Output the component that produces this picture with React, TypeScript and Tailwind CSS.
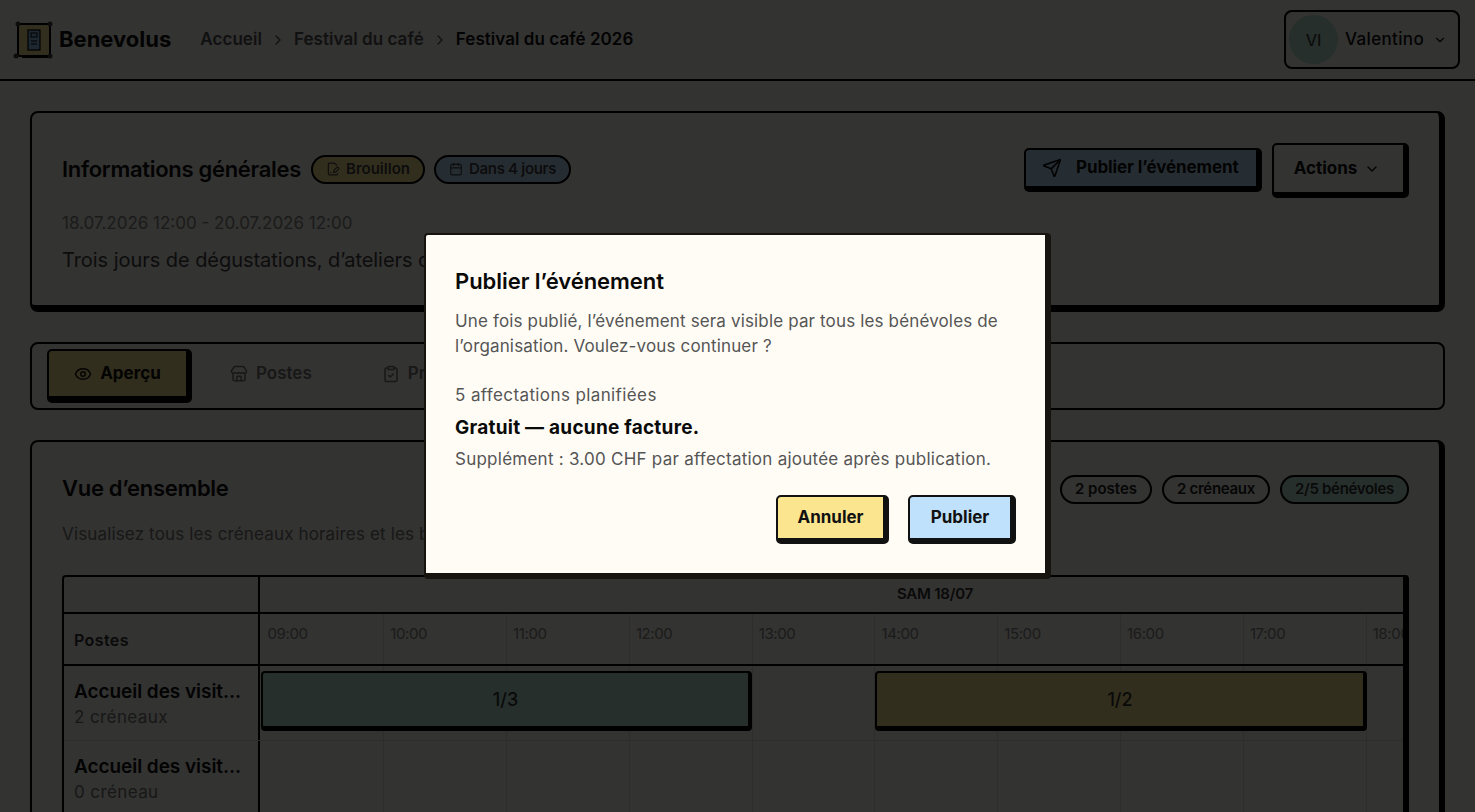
import { Calendar, ChevronDown, ChevronRight, ClipboardCheck, Eye, FileSignature, Send, Store } from "lucide-react";

const hours = ["09:00", "10:00", "11:00", "12:00", "13:00", "14:00", "15:00", "16:00", "17:00", "18:00"];

function Logo() {
  return (
    <svg width="42" height="42" viewBox="0 0 42 42" className="shrink-0">
      <rect x="5" y="5" width="32" height="32" rx="2" fill="#fbe68f" stroke="#000" strokeWidth="2" />
      <path d="M37 8v30H9" fill="none" stroke="#000" strokeWidth="2" />
      <rect x="15" y="11" width="12" height="20" fill="#8fc4ee" stroke="#000" strokeWidth="1.2" />
      <rect x="18" y="14" width="6" height="4" fill="none" stroke="#000" strokeWidth="1" />
      <path d="M18 22h6M18 25h6" stroke="#000" strokeWidth="1" />
      <circle cx="5" cy="5" r="2.5" fill="#444" />
      <circle cx="37" cy="5" r="2.5" fill="#444" />
      <circle cx="3" cy="37" r="2.5" fill="#444" />
      <circle cx="37" cy="37" r="2.5" fill="#444" />
    </svg>
  );
}

function Timeline() {
  return (
    <div className="flex h-full w-[1350px] pl-[1.5px]">
      {hours.map((h) => (
        <div key={h} className="h-full w-[122.8px] shrink-0 border-r border-black/10" />
      ))}
    </div>
  );
}

export default function App() {
  return (
    <div className="relative h-screen overflow-hidden bg-[#fffcf5] font-['Inter',sans-serif] text-[#111]">
      <header className="flex h-[81px] items-center justify-between border-b-2 border-black pl-[13px] pr-[15px]">
        <div className="flex items-center">
          <div className="flex items-center">
            <Logo />
            <span className="ml-[4px] text-[22px] font-bold tracking-[0px]">Benevolus</span>
          </div>
          <nav className="ml-[29px] flex items-center text-[17px] font-semibold tracking-[0.05px] text-[#555]">
            <span>Accueil</span>
            <ChevronRight className="mx-[8px] h-4 w-4" />
            <span>Festival du café</span>
            <ChevronRight className="mx-[8px] h-4 w-4" />
            <span className="text-[#111]">Festival du café 2026</span>
          </nav>
        </div>
        <button className="flex h-[59px] w-[176px] items-center rounded-lg border-2 border-black pl-[3px]">
          <span className="flex h-[49px] w-[49px] items-center justify-center rounded-full bg-[#bdebdc] text-[16px] font-medium text-[#444]">VI</span>
          <span className="ml-[7px] text-[17px] font-medium tracking-[0.35px]">Valentino</span>
          <ChevronDown className="ml-[9px] h-[14px] w-[14px]" />
        </button>
      </header>

      <main className="flex flex-col gap-[30px] px-[30px] pt-[30px]">
        <section className="h-[201px] rounded-lg border-2 border-b-[7px] border-r-[6px] border-black px-[30px] pt-[30px]">
          <div className="flex items-start justify-between">
            <div className="flex items-center pt-[9.5px]">
              <h2 className="text-[22px] font-semibold tracking-[-0.3px]">Informations générales</h2>
              <span className="ml-[10px] flex h-[29px] items-center gap-[6px] rounded-full border-2 border-black bg-[#fbe68f] px-[13px] text-[15px] font-semibold tracking-[0px] text-[#444]">
                <FileSignature className="h-[14px] w-[14px]" />
                Brouillon
              </span>
              <span className="ml-[9px] flex h-[29px] items-center gap-[6px] rounded-full border-2 border-black bg-[#bfe1fb] px-[13px] text-[15px] font-semibold tracking-[-0.3px] text-[#444]">
                <Calendar className="h-[14px] w-[14px]" />
                Dans 4 jours
              </span>
            </div>
            <div className="flex items-start gap-[10px]">
              <button className="mt-[5px] flex h-[44px] w-[238px] items-center rounded-[5px] border-2 border-b-[6px] border-r-[6px] border-black bg-[#bfe1fb] pl-[16px] text-[17px] font-bold">
                <Send className="h-5 w-5" />
                <span className="ml-[14px] tracking-[-0.1px]">Publier l’événement</span>
              </button>
              <button className="flex h-[55px] w-[137px] items-center justify-center gap-[7px] rounded-[5px] border-2 border-b-[6px] border-r-[6px] border-black bg-[#fffcf5] pr-[3px] text-[17px] font-bold">
                Actions
                <ChevronDown className="h-4 w-4" />
              </button>
            </div>
          </div>
          <p className="mt-[13px] text-[17px] tracking-[0px] text-[#888]">18.07.2026 12:00 - 20.07.2026 12:00</p>
          <p className="mt-[8px] text-[20px] tracking-[-0.05px] text-[#444]">Trois jours de dégustations, d’ateliers de torréfaction</p>
        </section>

        <section className="flex h-[68px] items-start gap-[38px] rounded-lg border-2 border-black pl-[15px] pt-[5px]">
          <button className="flex h-[54px] w-[145px] items-center justify-center gap-[8px] rounded-[5px] border-2 border-b-[7px] border-r-[6px] border-black bg-[#fbe68f] text-[17px] font-bold">
            <Eye className="h-[18px] w-[18px]" />
            Aperçu
          </button>
          <span className="flex h-[50px] items-center gap-[8px] text-[17px] font-semibold text-[#777]">
            <Store className="h-[18px] w-[18px]" />
            Postes
          </span>
          <span className="ml-[32px] flex h-[50px] items-center gap-[8px] text-[17px] font-semibold text-[#777]">
            <ClipboardCheck className="h-[18px] w-[18px]" />
            Programme
          </span>
        </section>

        <section className="h-[500px] rounded-lg border-2 border-r-[6px] border-black px-[30px] pt-[30px]">
          <div className="flex items-start justify-between">
            <h2 className="text-[22px] font-semibold tracking-[-0.3px]">Vue d’ensemble</h2>
            <div className="flex gap-[10px] pt-[3px]">
              <span className="flex h-[29px] items-center rounded-full border-2 border-black px-[13px] text-[15px] font-semibold tracking-[0px] text-[#222]">2 postes</span>
              <span className="flex h-[29px] items-center rounded-full border-2 border-black px-[13px] text-[15px] font-semibold tracking-[-0.3px] text-[#222]">2 créneaux</span>
              <span className="flex h-[29px] items-center rounded-full border-2 border-black bg-[#bdebdc] px-[13px] text-[15px] font-semibold tracking-[-0.3px] text-[#333]">2/5 bénévoles</span>
            </div>
          </div>
          <p className="mt-[17px] text-[17px] tracking-[0.15px] text-[#777]">Visualisez tous les créneaux horaires et les bénévoles affectés</p>

          <div className="mt-[27.5px] overflow-hidden rounded-t-[4px] border-2 border-b-0 border-r-[6px] border-black">
            <div className="flex h-[37px] border-b-2 border-black">
              <div className="w-[196px] shrink-0 border-r-2 border-black" />
              <div className="flex-1 overflow-hidden">
                <div className="flex h-full w-[1350px] items-center justify-center text-[15px] font-semibold tracking-[-0.2px] text-[#333]">SAM 18/07</div>
              </div>
            </div>
            <div className="flex h-[52px] border-b-2 border-black">
              <div className="flex w-[196px] shrink-0 items-center border-r-2 border-black pl-[10px] pt-[2px] text-[16px] font-semibold tracking-[0.4px] text-[#333]">Postes</div>
              <div className="flex flex-1 overflow-hidden pl-[1.5px]">
                {hours.map((h) => (
                  <div key={h} className="h-full w-[122.8px] shrink-0 border-r border-black/10 pl-[6px] pt-[9px] text-[15px] tracking-[-0.4px] text-[#888]">
                    {h}
                  </div>
                ))}
              </div>
            </div>
            <div className="flex h-[75px] border-b border-black/10">
              <div className="w-[196px] shrink-0 border-r-2 border-black pl-[10px] pt-[12px]">
                <p className="truncate text-[19px] font-semibold leading-[27px] tracking-[-0.05px]">Accueil des visit...</p>
                <p className="text-[17px] leading-[25px] tracking-[0.4px] text-[#777]">2 créneaux</p>
              </div>
              <div className="relative flex-1 overflow-hidden">
                <Timeline />
                <div className="absolute left-[1px] top-[5px] flex h-[60px] w-[491px] items-center justify-center rounded-[4px] border-2 border-b-[5px] border-r-[4px] border-black bg-[#bdebdc] text-[18px] font-medium text-[#333]">1/3</div>
                <div className="absolute left-[615px] top-[5px] flex h-[60px] w-[492px] items-center justify-center rounded-[4px] border-2 border-b-[5px] border-r-[4px] border-black bg-[#fbe68f] text-[18px] font-medium text-[#333]">1/2</div>
              </div>
            </div>
            <div className="flex h-[75px]">
              <div className="w-[196px] shrink-0 border-r-2 border-black pl-[10px] pt-[12px]">
                <p className="truncate text-[19px] font-semibold leading-[27px] tracking-[-0.05px]">Accueil des visit...</p>
                <p className="text-[17px] leading-[25px] tracking-[0.4px] text-[#777]">0 créneau</p>
              </div>
              <div className="flex-1 overflow-hidden">
                <Timeline />
              </div>
            </div>
          </div>
        </section>
      </main>

      <div className="fixed inset-0 flex items-center justify-center bg-black/80">
        <div className="w-[627px] rounded-[4px] border-2 border-b-[6px] border-r-[6px] border-[#17130f] bg-[#fffcf5] px-[29px] pb-[29px] pt-[31px]">
          <h2 className="text-[22px] font-semibold leading-[30px] tracking-[-0.04px] text-[#0a0a0a]">Publier l’événement</h2>
          <p className="mt-[13px] text-[17px] leading-[25px] tracking-[0.15px] text-[#555]">
            Une fois publié, l’événement sera visible par tous les bénévoles de l’organisation. Voulez-vous continuer ?
          </p>
          <p className="mt-[24px] text-[17px] leading-[25px] tracking-[0.39px] text-[#555]">5 affectations planifiées</p>
          <p className="mt-[7px] text-[19px] font-bold leading-[25px] tracking-[0.24px] text-[#0a0a0a]">Gratuit — aucune facture.</p>
          <p className="mt-[7px] text-[17px] leading-[25px] tracking-[0.25px] text-[#555]">Supplément : 3.00 CHF par affectation ajoutée après publication.</p>
          <div className="mt-[23px] flex justify-end gap-[19px]">
            <button className="h-[49px] w-[113px] rounded-[5px] border-2 border-b-[6px] border-r-[6px] border-[#111] bg-[#fbe68f] text-[17px] font-bold text-[#111]">Annuler</button>
            <button className="h-[49px] w-[108px] rounded-[5px] border-2 border-b-[6px] border-r-[6px] border-[#111] bg-[#bfe1fb] text-[17px] font-bold text-[#111]">Publier</button>
          </div>
        </div>
      </div>
    </div>
  );
}
